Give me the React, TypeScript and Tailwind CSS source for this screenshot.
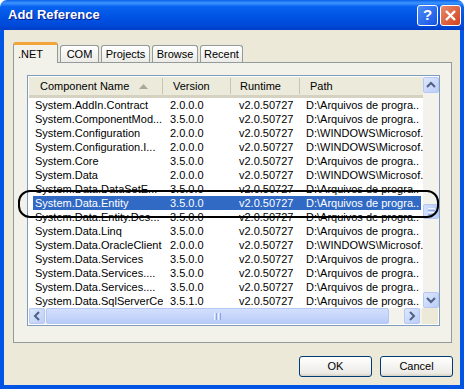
const rows = [
  ["System.AddIn.Contract", "2.0.0.0", "v2.0.50727", "D:\\Arquivos de progra.."],
  ["System.ComponentMod...", "3.5.0.0", "v2.0.50727", "D:\\Arquivos de progra.."],
  ["System.Configuration", "2.0.0.0", "v2.0.50727", "D:\\WINDOWS\\Microsof."],
  ["System.Configuration.I...", "2.0.0.0", "v2.0.50727", "D:\\WINDOWS\\Microsof."],
  ["System.Core", "3.5.0.0", "v2.0.50727", "D:\\Arquivos de progra.."],
  ["System.Data", "2.0.0.0", "v2.0.50727", "D:\\WINDOWS\\Microsof."],
  ["System.Data.DataSetE...", "3.5.0.0", "v2.0.50727", "D:\\Arquivos de progra.."],
  ["System.Data.Entity", "3.5.0.0", "v2.0.50727", "D:\\Arquivos de progra.."],
  ["System.Data.Entity.Des...", "3.5.0.0", "v2.0.50727", "D:\\Arquivos de progra.."],
  ["System.Data.Linq", "3.5.0.0", "v2.0.50727", "D:\\Arquivos de progra.."],
  ["System.Data.OracleClient", "2.0.0.0", "v2.0.50727", "D:\\WINDOWS\\Microsof."],
  ["System.Data.Services", "3.5.0.0", "v2.0.50727", "D:\\Arquivos de progra.."],
  ["System.Data.Services....", "3.5.0.0", "v2.0.50727", "D:\\Arquivos de progra.."],
  ["System.Data.Services....", "3.5.0.0", "v2.0.50727", "D:\\Arquivos de progra.."],
  ["System.Data.SqlServerCe", "3.5.1.0", "v2.0.50727", "D:\\Arquivos de progra.."],
]

const tabs = [
  { label: ".NET", w: "w-[45px]" },
  { label: "COM", w: "w-[39px]" },
  { label: "Projects", w: "w-[49px]" },
  { label: "Browse", w: "w-[46px]" },
  { label: "Recent", w: "w-[43px]" },
]

function Arrow({ dir }: { dir: "up" | "down" | "left" | "right" }) {
  const d = {
    up: "M3 9 L7 5 L11 9",
    down: "M3 5 L7 9 L11 5",
    left: "M9 3 L5 7 L9 11",
    right: "M5 3 L9 7 L5 11",
  }[dir]
  return (
    <svg width="14" height="14" viewBox="0 0 14 14">
      <path d={d} fill="none" stroke="#4D6185" strokeWidth="2" />
    </svg>
  )
}

function ScrollBtn({ dir }: { dir: "up" | "down" | "left" | "right" }) {
  return (
    <div className="flex h-[16px] w-[16px] shrink-0 items-center justify-center rounded-[2px] border border-[#B5C8F3] bg-[linear-gradient(135deg,#DDE7FD,#BBCDF8)]">
      <Arrow dir={dir} />
    </div>
  )
}

export default function App() {
  return (
    <div className="relative flex h-[389px] w-[464px] flex-col overflow-hidden bg-white font-['Liberation_Sans',Arial,sans-serif] text-[11px] text-black">
      {/* title bar */}
      <div className="flex h-[30px] shrink-0 items-center rounded-t-[7px] bg-[linear-gradient(to_bottom,#0A5FE8,#3D95FF_10%,#0862F0_22%,#0054E3_55%,#0049D9_85%,#003DC8)] pl-[8px] pr-[3px]">
        <span className="flex-1 text-[13px] font-bold text-white [text-shadow:1px_1px_#0A1A8A]">Add Reference</span>
        <div className="flex h-[21px] w-[21px] items-center justify-center rounded-[3px] border border-white bg-[linear-gradient(135deg,#4C8CF8,#1554E4)] text-[15px] font-bold text-white">?</div>
        <div className="ml-[2px] flex h-[21px] w-[21px] items-center justify-center rounded-[3px] border border-white bg-[linear-gradient(135deg,#E98A6C,#D5411C)]">
          <svg width="13" height="13" viewBox="0 0 13 13">
            <path d="M2 2 L11 11 M11 2 L2 11" stroke="white" strokeWidth="2.4" />
          </svg>
        </div>
      </div>

      {/* body */}
      <div className="flex flex-1 flex-col border-x-4 border-b-4 border-[#0055E5] bg-[#ECE9D8] pl-[9px] pr-[7px] pt-[12px]">
        {/* tabs */}
        <div className="flex h-[20px] items-end">
          {tabs.map((t, i) =>
            i === 0 ? (
              <div key={t.label} className={`relative z-10 -mb-px flex h-[21px] ${t.w} items-start rounded-t-[3px] border-x border-t-[3px] border-x-[#919B9C] border-t-[#F0A43A] bg-[#F2F1EA] pl-[4px] pt-[1px]`}>
                {t.label}
              </div>
            ) : (
              <div key={t.label} className={`ml-[2px] flex h-[17px] ${t.w} items-center justify-center rounded-t-[3px] border-x border-t border-[#919B9C] bg-[linear-gradient(to_bottom,#FFFFFF,#ECEBE6)]`}>
                {t.label}
              </div>
            ),
          )}
        </div>

        {/* panel */}
        <div className="h-[281px] w-[439px] border border-[#919B9C] bg-[#F2F1EA] pb-[16px] pl-[13px] pr-[12px] pt-[12px]">
          <div className="flex w-[413px] flex-col border border-[#7F9DB9] bg-white p-px">
            <div className="flex">
              <div className="flex w-[394px] flex-col">
                {/* header */}
                <div className="flex h-[21px] items-center border-b-[3px] border-[#D6D2C2] bg-[#EBEADB]">
                  <div className="flex w-[134px] items-center border-r border-[#C7C5B2] pl-[11px]">
                    <span>Component Name</span>
                    <svg className="ml-[10px]" width="9" height="5" viewBox="0 0 9 5">
                      <path d="M0 5 L4.5 0 L9 5 Z" fill="#ACA899" />
                    </svg>
                  </div>
                  <div className="w-[68px] border-r border-[#C7C5B2] pl-[10px]">Version</div>
                  <div className="w-[69px] border-r border-[#C7C5B2] pl-[9px]">Runtime</div>
                  <div className="flex-1 pl-[10px]">Path</div>
                </div>
                {/* rows */}
                {rows.map((r, i) => {
                  const sel = i === 7
                  return (
                    <div key={i} className="flex h-[14px] pl-[4px] pr-[2px]">
                      <div className={`flex flex-1 items-center whitespace-nowrap ${sel ? "bg-[#316AC5] text-white" : ""}`}>
                        <span className="w-[130px] overflow-hidden pl-[2px]">{r[0]}</span>
                        <span className="w-[68px] pl-[7px]">{r[1]}</span>
                        <span className="w-[69px] pl-[8px]">{r[2]}</span>
                        <span className="flex-1 overflow-hidden pl-[6px]">{r[3]}</span>
                      </div>
                    </div>
                  )
                })}
              </div>
              {/* vertical scrollbar */}
              <div className="flex w-[16px] flex-col bg-[#F3F2EC]">
                <ScrollBtn dir="up" />
                <div className="h-[111px]" />
                <div className="flex h-[15px] w-[16px] flex-col items-center justify-center gap-[1px] rounded-[2px] border border-[#B5C8F3] bg-[linear-gradient(90deg,#D3DFFD,#B9CCF8)]">
                  <div className="h-px w-[7px] bg-[#EEF3FE]" />
                  <div className="h-px w-[7px] bg-[#8CA6E0]" />
                  <div className="h-px w-[7px] bg-[#EEF3FE]" />
                  <div className="h-px w-[7px] bg-[#8CA6E0]" />
                </div>
                <div className="flex-1" />
                <ScrollBtn dir="down" />
              </div>
            </div>
            {/* horizontal scrollbar */}
            <div className="flex h-[16px]">
              <div className="flex w-[394px] bg-[#F3F2EC]">
                <ScrollBtn dir="left" />
                <div className="ml-px flex h-[16px] w-[343px] items-center justify-center gap-[1px] rounded-[2px] border border-[#B5C8F3] bg-[linear-gradient(to_bottom,#D3DFFD,#B9CCF8)]">
                  <div className="h-[7px] w-px bg-[#EEF3FE]" />
                  <div className="h-[7px] w-px bg-[#8CA6E0]" />
                  <div className="h-[7px] w-px bg-[#EEF3FE]" />
                  <div className="h-[7px] w-px bg-[#8CA6E0]" />
                </div>
                <div className="flex-1" />
                <ScrollBtn dir="right" />
                <div className="w-[2px]" />
              </div>
              <div className="w-[16px] bg-[#ECE9D8]" />
            </div>
          </div>
        </div>

        {/* buttons */}
        <div className="mt-[13px] flex justify-end gap-[8px] pr-[0px]">
          <button className="h-[21px] w-[73px] rounded-[3px] border border-[#003C74] bg-[linear-gradient(to_bottom,#FFFFFF,#ECEBE6_85%,#D6D0C5)]">OK</button>
          <button className="h-[21px] w-[73px] rounded-[3px] border border-[#003C74] bg-[linear-gradient(to_bottom,#FFFFFF,#ECEBE6_85%,#D6D0C5)]">Cancel</button>
        </div>
      </div>

      {/* hand-drawn highlight around the selected row */}
      <div className="pointer-events-none absolute left-[18px] top-[190px] h-[28px] w-[421px] rounded-[12px] border-2 border-black" />
    </div>
  )
}
